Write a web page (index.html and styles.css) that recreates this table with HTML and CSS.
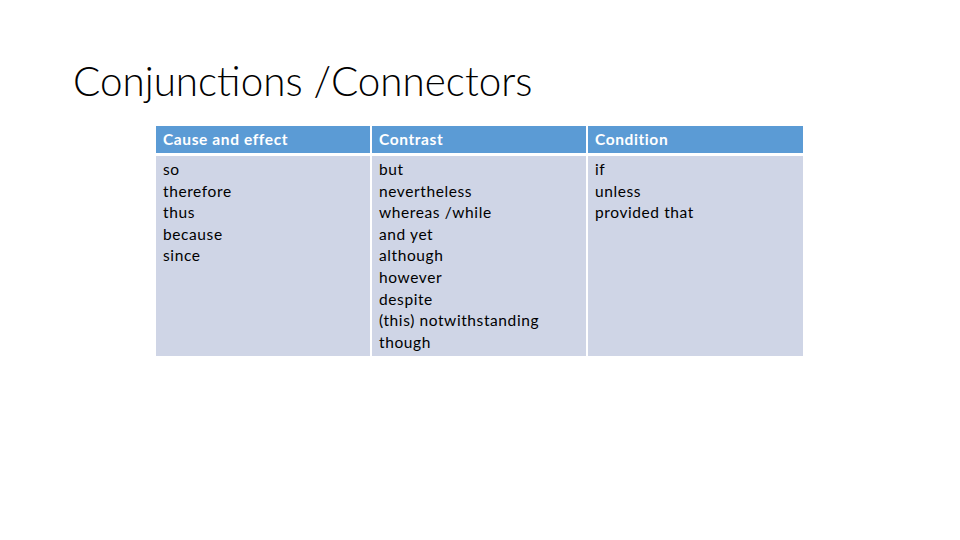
FILE: index.html
```html
<!DOCTYPE html>
<html>
<head>
<meta charset="utf-8">
<link rel="stylesheet" href="styles.css">
</head>
<body>
<div class="slide">
  <h1 class="title">Conjunctions /Connectors</h1>
  <div class="table">
    <div class="cell head">Cause and effect</div>
    <div class="cell head">Contrast</div>
    <div class="cell head">Condition</div>
    <div class="cell body">so<br>therefore<br>thus<br>because<br>since</div>
    <div class="cell body">but<br>nevertheless<br>whereas /while<br>and yet<br>although<br>however<br>despite<br>(this) notwithstanding<br>though</div>
    <div class="cell body">if<br>unless<br>provided that</div>
  </div>
</div>
</body>
</html>
```
FILE: styles.css
```css
html, body {
  margin: 0;
  padding: 0;
  background: #ffffff;
}
.slide {
  width: 960px;
  height: 540px;
  position: relative;
  overflow: hidden;
  font-family: Lato, "Open Sans", sans-serif;
}
.title {
  margin: 0;
  padding: 56px 0 0 73px;
  font-family: Lato, "Open Sans", sans-serif;
  font-weight: 300;
  font-size: 40.4px;
  line-height: 50px;
  color: #000000;
}
.table {
  margin: 20px 0 0 156px;
  width: 647px;
  display: grid;
  grid-template-columns: 214px 214px 215px;
  grid-template-rows: 27px 200px;
  column-gap: 2px;
  row-gap: 3px;
}
.cell {
  padding: 0 7px;
  font-size: 15.5px;
  letter-spacing: 0.6px;
  color: #000000;
}
.head {
  background: #5b9bd5;
  color: #ffffff;
  font-weight: 700;
  line-height: 27px;
}
.body {
  background: #cfd5e6;
  line-height: 21.6px;
  padding-top: 3px;
}
```
